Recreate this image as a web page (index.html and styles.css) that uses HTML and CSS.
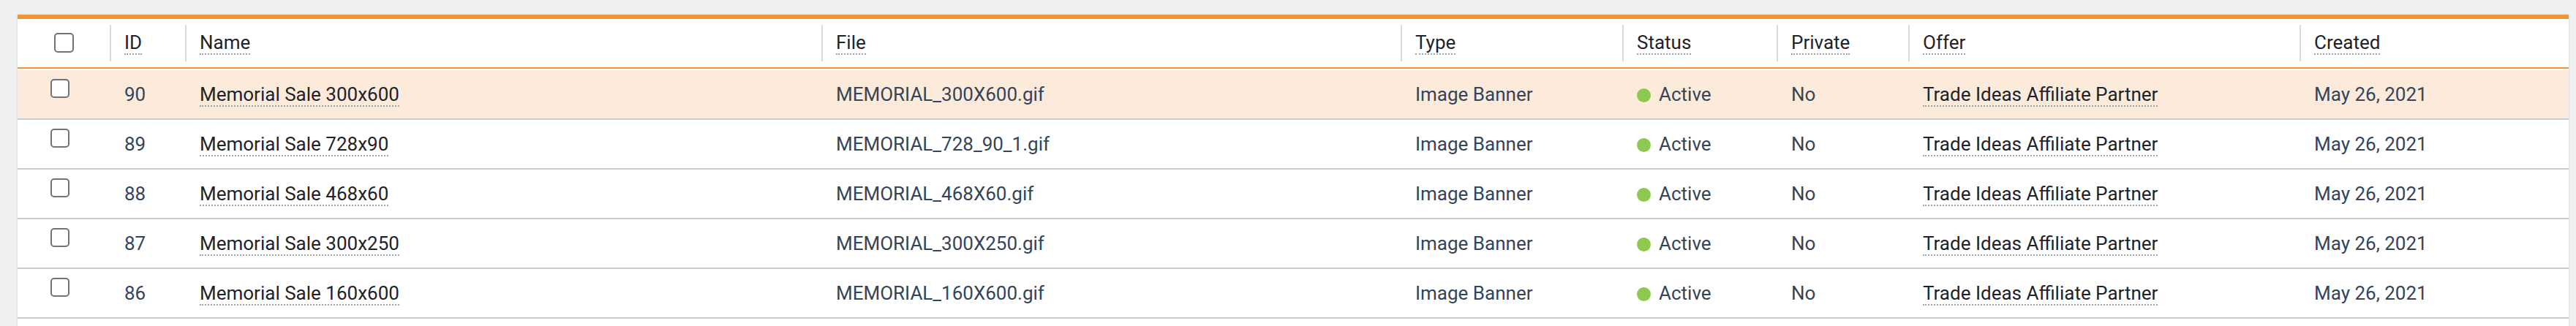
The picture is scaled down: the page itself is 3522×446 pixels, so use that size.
FILE: index.html
```html
<!DOCTYPE html>
<html lang="en">
<head>
<meta charset="utf-8">
<title>Banners</title>
<link rel="stylesheet" href="styles.css">
</head>
<body>
<div class="card">
  <table class="grid">
    <colgroup>
      <col class="c-check"><col class="c-id"><col class="c-name"><col class="c-file"><col class="c-type"><col class="c-status"><col class="c-private"><col class="c-offer"><col class="c-created">
    </colgroup>
    <thead>
      <tr>
        <th class="th-check"><span class="box box-head"></span></th>
        <th class="sep"><span class="dot-u">ID</span></th>
        <th class="sep"><span class="dot-u">Name</span></th>
        <th class="sep"><span class="dot-u">File</span></th>
        <th class="sep"><span class="dot-u">Type</span></th>
        <th class="sep"><span class="dot-u">Status</span></th>
        <th class="sep"><span class="dot-u">Private</span></th>
        <th class="sep"><span class="dot-u">Offer</span></th>
        <th class="sep"><span class="dot-u">Created</span></th>
      </tr>
    </thead>
    <tbody>
      <tr class="hl">
        <td class="td-check"><span class="box"></span></td>
        <td class="muted">90</td>
        <td><span class="link">Memorial Sale 300x600</span></td>
        <td class="muted">MEMORIAL_300X600.gif</td>
        <td class="muted">Image Banner</td>
        <td class="muted"><span class="status"></span>Active</td>
        <td class="muted">No</td>
        <td><span class="link">Trade Ideas Affiliate Partner</span></td>
        <td class="muted">May 26, 2021</td>
      </tr>
      <tr>
        <td class="td-check"><span class="box"></span></td>
        <td class="muted">89</td>
        <td><span class="link">Memorial Sale 728x90</span></td>
        <td class="muted">MEMORIAL_728_90_1.gif</td>
        <td class="muted">Image Banner</td>
        <td class="muted"><span class="status"></span>Active</td>
        <td class="muted">No</td>
        <td><span class="link">Trade Ideas Affiliate Partner</span></td>
        <td class="muted">May 26, 2021</td>
      </tr>
      <tr>
        <td class="td-check"><span class="box"></span></td>
        <td class="muted">88</td>
        <td><span class="link">Memorial Sale 468x60</span></td>
        <td class="muted">MEMORIAL_468X60.gif</td>
        <td class="muted">Image Banner</td>
        <td class="muted"><span class="status"></span>Active</td>
        <td class="muted">No</td>
        <td><span class="link">Trade Ideas Affiliate Partner</span></td>
        <td class="muted">May 26, 2021</td>
      </tr>
      <tr>
        <td class="td-check"><span class="box"></span></td>
        <td class="muted">87</td>
        <td><span class="link">Memorial Sale 300x250</span></td>
        <td class="muted">MEMORIAL_300X250.gif</td>
        <td class="muted">Image Banner</td>
        <td class="muted"><span class="status"></span>Active</td>
        <td class="muted">No</td>
        <td><span class="link">Trade Ideas Affiliate Partner</span></td>
        <td class="muted">May 26, 2021</td>
      </tr>
      <tr>
        <td class="td-check"><span class="box"></span></td>
        <td class="muted">86</td>
        <td><span class="link">Memorial Sale 160x600</span></td>
        <td class="muted">MEMORIAL_160X600.gif</td>
        <td class="muted">Image Banner</td>
        <td class="muted"><span class="status"></span>Active</td>
        <td class="muted">No</td>
        <td><span class="link">Trade Ideas Affiliate Partner</span></td>
        <td class="muted">May 26, 2021</td>
      </tr>
    </tbody>
  </table>
  <div class="card-foot"></div>
</div>
</body>
</html>
```

FILE: styles.css
```css
html, body {
  margin: 0;
  background: #eff0f2;
}
body {
  padding: 20px 10px 0 24px;
  font-family: Roboto, "Liberation Sans", sans-serif;
  font-size: 26px;
  color: #1f2329;
}
.card {
  background: #fff;
  border-top: 6px solid #f0963a;
  box-shadow: 0 1px 3px rgba(0, 0, 0, 0.12);
}
.grid {
  width: 3488px;
  table-layout: fixed;
  border-collapse: separate;
  border-spacing: 0;
}
.c-check { width: 126px; }
.c-id { width: 103px; }
.c-name { width: 870px; }
.c-file { width: 792px; }
.c-type { width: 303px; }
.c-status { width: 211px; }
.c-private { width: 180px; }
.c-offer { width: 535px; }
.c-created { width: 368px; }

th {
  height: 64px;
  padding: 0 0 2px 20px;
  text-align: left;
  font-weight: 400;
  color: #1f2329;
  border-bottom: 2px solid #f0963a;
  vertical-align: middle;
  line-height: 30px;
}
th.sep {
  background: linear-gradient(#d8dadd, #d8dadd) left 8px / 2px 50px no-repeat;
}
th.th-check {
  padding-left: 50px;
}
.dot-u {
  border-bottom: 2px dotted #9ea4ab;
}
td {
  height: 66px;
  padding: 0 0 0 20px;
  border-bottom: 2px solid #c9cdd1;
  vertical-align: middle;
  white-space: nowrap;
  line-height: 30px;
}
tbody tr:first-child td {
  border-top: 2px solid #fff;
}
tr.hl td {
  background: #fcebdb;
}
td.td-check {
  padding-left: 45px;
  vertical-align: top;
  padding-top: 12px;
  height: 54px;
}
.muted {
  color: #34445a;
}
.link {
  color: #1f2329;
  border-bottom: 2px dotted #9ea4ab;
}
.box {
  display: block;
  width: 22px;
  height: 22px;
  border: 2px solid #737373;
  border-radius: 5px;
  background: #fff;
}
.box-head {
  width: 23px;
  height: 23px;
}
.status {
  display: inline-block;
  width: 19px;
  height: 19px;
  border-radius: 50%;
  background: #8dc94f;
  margin-right: 11px;
  vertical-align: -2px;
}
.card-foot {
  height: 10px;
}
```
